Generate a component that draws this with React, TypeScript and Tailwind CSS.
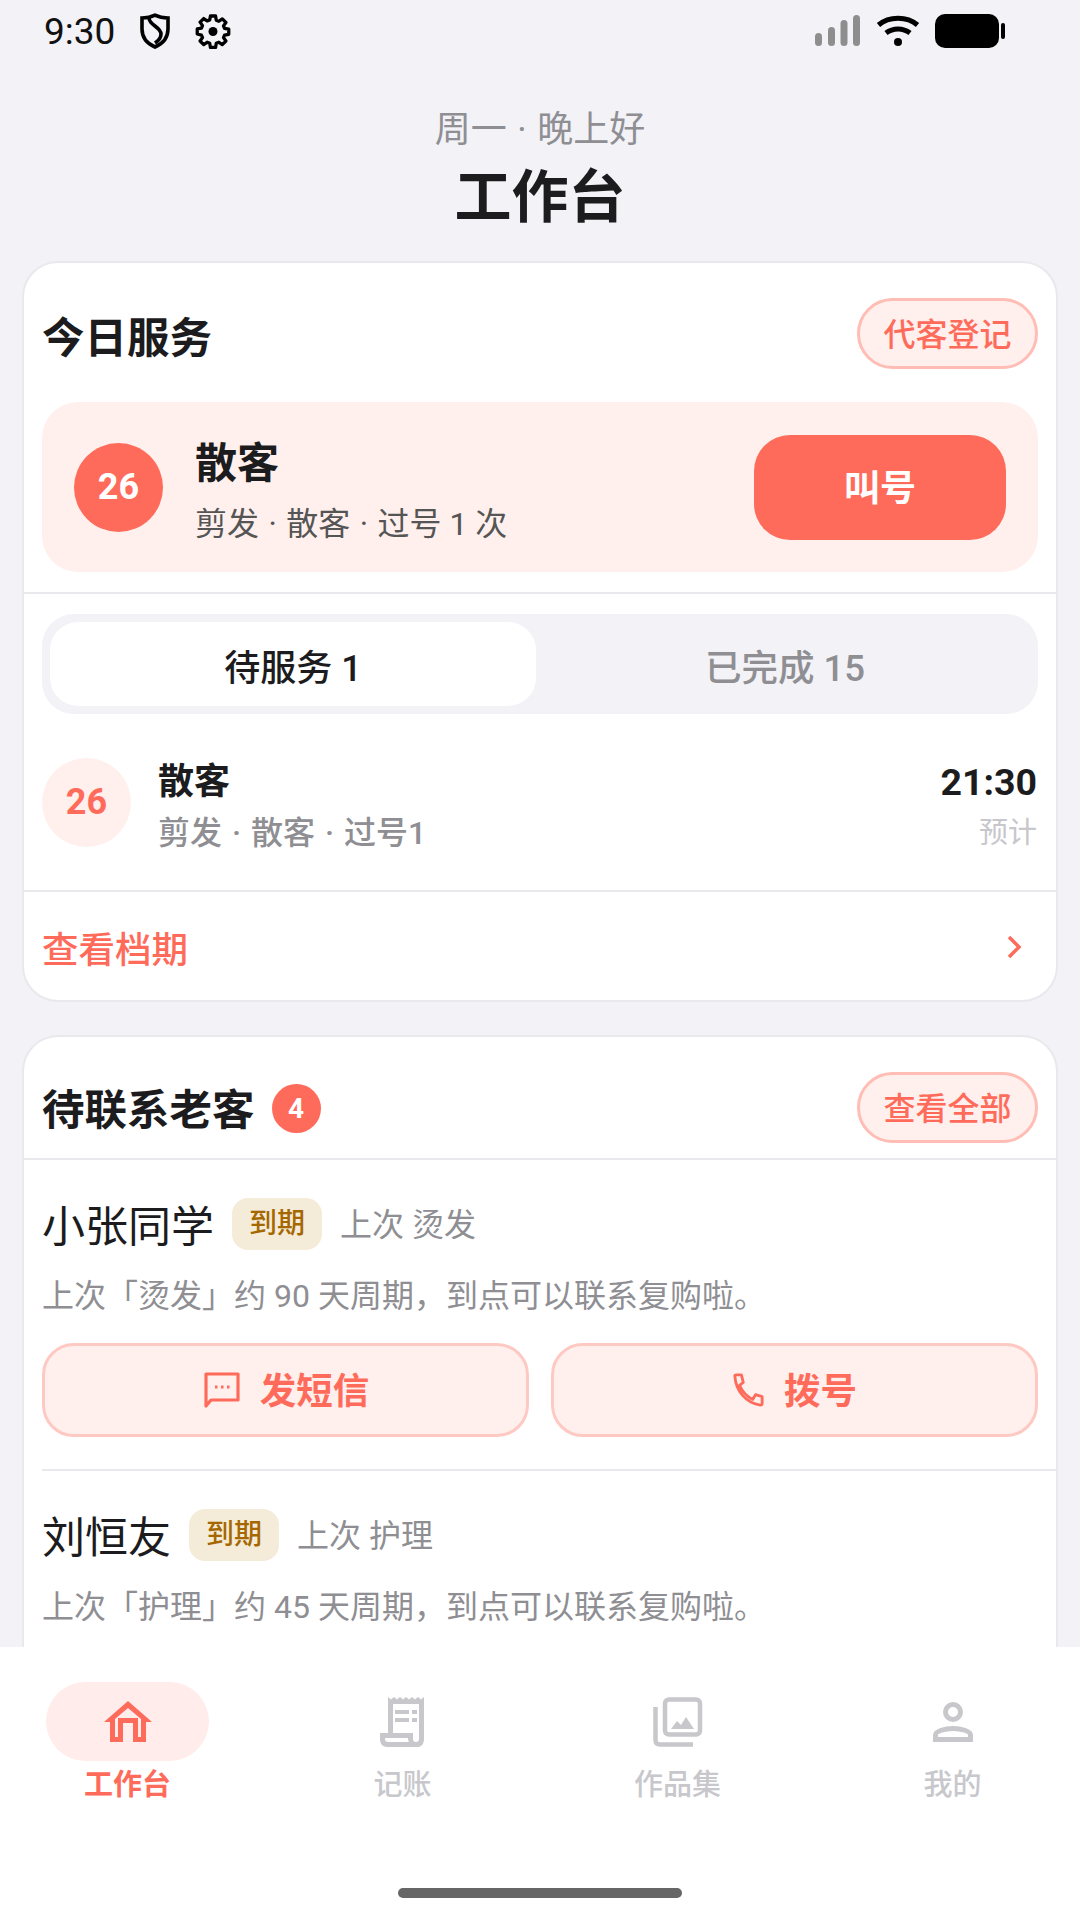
import React from "react";

const font = { fontFamily: 'Roboto, "Noto Sans CJK SC", sans-serif' };

function Dot({ m }: { m: string }) {
  return <span className={m}>·</span>;
}

function Pill({ children }: { children: React.ReactNode }) {
  return (
    <div className="flex h-[71px] w-[181px] items-center justify-center rounded-full border-[3px] border-[#ffbdb5] bg-[#fff0ed] pt-[2px] text-[32px] font-medium leading-none text-[#ff6b5b]">
      {children}
    </div>
  );
}

function Customer({ name, svc, days }: { name: string; svc: string; days: number }) {
  return (
    <div className="mx-[18px]">
      <div className="flex h-[52px] items-center">
        <span className="pt-[6px] text-[43px] leading-none text-[#1c1c1e]">{name}</span>
        <span className="ml-[18px] flex h-[52px] w-[90px] items-center justify-center rounded-[16px] bg-[#f5ebd9] text-[28px] font-medium leading-none text-[#a56800]">到期</span>
        <span className="ml-[18px] pt-[2px] text-[32px] leading-none text-[#8e8e93]">上次 {svc}</span>
      </div>
      <div className="mt-[26px] text-[32px] leading-[40px] text-[#8e8e93]">上次「{svc}」约 {days} 天周期，到点可以联系复购啦。</div>
    </div>
  );
}

function Action({ icon, label }: { icon: React.ReactNode; label: string }) {
  return (
    <div className="flex h-[94px] flex-1 items-center justify-center gap-[20px] rounded-[32px] border-[3px] border-[#ffc9c3] bg-[#fff0ed] text-[36.5px] font-bold leading-none text-[#ff6b5b]">
      {icon}
      <span className="pt-[5px]">{label}</span>
    </div>
  );
}

function NavItem({ label, active, icon }: { label: string; active?: boolean; icon: React.ReactNode }) {
  return (
    <div className="flex w-[163px] flex-col items-center">
      <div className={`flex h-[79px] w-[163px] items-center justify-center rounded-full ${active ? "bg-[#ffeceb]" : ""}`}>{icon}</div>
      <div className={`mt-[6px] text-[29px] leading-[36px] ${active ? "font-bold text-[#ff6b5b]" : "font-medium text-[#c7c7cc]"}`}>{label}</div>
    </div>
  );
}

export default function App() {
  return (
    <div style={font} className="flex h-[1920px] w-[1080px] flex-col overflow-hidden bg-[#f2f2f7]">
      <div className="flex-1 overflow-hidden">
        {/* status bar */}
        <div className="flex h-[62px] items-center justify-between pl-[44px] pr-[75px]">
          <div className="flex items-center">
            <span className="text-[37px] leading-none text-[#111]">9:30</span>
            <svg className="ml-[25px]" width="30" height="36" viewBox="0 0 30 36" fill="none" stroke="#000" strokeWidth="3.6">
              <path d="M15 2.2 C19 4.2 24 5 28 5 V16 C28 25 22 31 15 34 C8 31 2 25 2 16 V5 C6 5 11 4.2 15 2.2Z" />
              <path d="M9 5 C9 12 21 14 21 21 C21 25 18 28 15 30" />
            </svg>
            <svg className="ml-[25px]" width="36" height="36" viewBox="0 0 24 24" fill="none" stroke="#000" strokeWidth="2.2" strokeLinejoin="round">
              <path d="M10.3 2h3.4l.5 2.8 1.7.7 2.3-1.6 2.4 2.4-1.6 2.3.7 1.7 2.8.5v3.4l-2.8.5-.7 1.7 1.6 2.3-2.4 2.4-2.3-1.6-1.7.7-.5 2.8h-3.4l-.5-2.8-1.7-.7-2.3 1.6-2.4-2.4 1.6-2.3-.7-1.7L1.5 14v-3.4l2.8-.5.7-1.7-1.6-2.3 2.4-2.4 2.3 1.6 1.7-.7z" />
              <circle cx="12" cy="12.3" r="3" fill="#000" stroke="none" />
            </svg>
          </div>
          <div className="flex items-center">
            <svg width="45" height="32" viewBox="0 0 45 32" fill="#8e8e8e">
              <rect x="0" y="18" width="7" height="13" rx="3.5" />
              <rect x="13" y="12" width="7" height="19" rx="3.5" />
              <rect x="25.5" y="5" width="7" height="26" rx="3.5" />
              <rect x="38" y="0" width="7" height="31" rx="3.5" />
            </svg>
            <svg className="ml-[16px]" width="44" height="32" viewBox="0 0 44 32" fill="none" stroke="#000" strokeWidth="5">
              <path d="M2.5 10 C13 1 31 1 41.5 10" />
              <path d="M10 18 C17 12.5 27 12.5 34 18" />
              <circle cx="22" cy="27" r="4" fill="#000" stroke="none" />
            </svg>
            <svg className="ml-[15px]" width="70" height="34" viewBox="0 0 70 34" fill="#000">
              <rect x="0" y="0" width="64" height="34" rx="10" />
              <rect x="66" y="9" width="4" height="16" rx="2" />
            </svg>
          </div>
        </div>

        {/* header */}
        <div className="flex flex-col items-center">
          <div className="mt-[46px] text-[36px] leading-[44px] text-[#8e8e93]">周一 <Dot m="mx-[1.5px]" /> 晚上好</div>
          <div className="mt-[11px] text-[57px] font-bold leading-[70px] text-[#1c1c1e]">工作台</div>
        </div>

        {/* today card */}
        <div className="mx-[22px] mt-[28px] overflow-hidden rounded-[36px] border-2 border-[#e8e8ed] bg-white">
          <div className="flex items-center justify-between px-[18px] pt-[35px]">
            <span className="pt-[12px] text-[42.5px] font-bold leading-none text-[#1c1c1e]">今日服务</span>
            <Pill>代客登记</Pill>
          </div>
          <div className="mx-[18px] mt-[33px] flex h-[170px] items-center rounded-[36px] bg-[#fff0ed] px-[32px]">
            <div className="flex h-[89px] w-[89px] items-center justify-center rounded-full bg-[#ff6b5b] text-[36px] font-bold leading-none text-white">26</div>
            <div className="ml-[32px] flex-1 pt-[8px]">
              <div className="text-[42px] font-bold leading-[52px] text-[#1c1c1e]">散客</div>
              <div className="mt-[14px] text-[32px] leading-[40px] text-[#555]">剪发 <Dot m="mx-[1.5px]" /> 散客 <Dot m="mx-[1.5px]" /> 过号 1 次</div>
            </div>
            <div className="flex h-[105px] w-[252px] items-center justify-center rounded-[36px] bg-[#ff6b5b] pt-[3px] text-[36px] font-bold leading-none text-white">叫号</div>
          </div>
          <div className="mt-[20px] h-[2px] bg-[#e8e8ed]" />
          <div className="mx-[18px] mt-[20px] flex h-[100px] rounded-[32px] bg-[#f2f2f7] p-[8px]">
            <div className="flex w-[486px] items-center justify-center rounded-[28px] bg-white pt-[10px] text-[36px] font-medium leading-none text-[#1c1c1e]">待服务 1</div>
            <div className="flex flex-1 items-center justify-center pl-[4px] pt-[10px] text-[36.5px] font-medium leading-none text-[#8e8e93]">已完成 15</div>
          </div>
          <div className="flex h-[176px] items-center px-[18px]">
            <div className="flex h-[89px] w-[89px] items-center justify-center rounded-full bg-[#fff0ed] text-[36px] font-bold leading-none text-[#ff6b5b]">26</div>
            <div className="ml-[27px] flex-1 pt-[9px]">
              <div className="text-[36px] font-bold leading-[44px] text-[#1c1c1e]">散客</div>
              <div className="mt-[9px] text-[32px] font-medium leading-[40px] text-[#8e8e93]">剪发 <Dot m="mx-[2px]" /> 散客 <Dot m="mx-[2px]" /> 过号1</div>
            </div>
            <div className="flex flex-col items-end pr-[1px] pt-[8px]">
              <div className="text-[37.5px] font-bold leading-[44px] text-[#1c1c1e]">21:30</div>
              <div className="mt-[10px] text-[29px] leading-[38px] text-[#c7c7cc]">预计</div>
            </div>
          </div>
          <div className="h-[2px] bg-[#e8e8ed]" />
          <div className="flex h-[108px] items-center justify-between pl-[18px] pr-[34px]">
            <span className="pt-[11px] text-[36.5px] font-medium leading-none text-[#ff6b5b]">查看档期</span>
            <svg className="mt-[2px]" width="16" height="24" viewBox="0 0 16 24" fill="none" stroke="#ff6b5b" strokeWidth="3.5">
              <path d="M3 2 L13 12 L3 22" />
            </svg>
          </div>
        </div>

        {/* returning card */}
        <div className="mx-[22px] mt-[33px] rounded-t-[36px] border-x-2 border-t-2 border-[#e8e8ed] bg-white pb-[120px]">
          <div className="flex items-center justify-between px-[18px] pt-[35px]">
            <div className="flex items-center">
              <span className="pt-[8px] text-[42.5px] font-bold leading-none text-[#1c1c1e]">待联系老客</span>
              <span className="ml-[17px] mt-[2px] flex h-[49px] w-[49px] items-center justify-center rounded-full bg-[#ff6b5b] text-[28px] font-bold leading-none text-white">4</span>
            </div>
            <Pill>查看全部</Pill>
          </div>
          <div className="mt-[15px] h-[2px] bg-[#e8e8ed]" />
          <div className="pt-[38px]">
            <Customer name="小张同学" svc="烫发" days={90} />
            <div className="mx-[18px] mt-[27px] flex gap-[22px]">
              <Action
                label="发短信"
                icon={
                  <svg className="ml-[2px]" width="36" height="36" viewBox="0 0 36 36" fill="none" stroke="#ff6b5b" strokeWidth="3.2">
                    <path d="M2 2 H34 V28 H7 L2 34 Z" strokeLinejoin="round" />
                    <path d="M11 15h2.5M17 15h2.5M23 15h2.5" strokeWidth="3" />
                  </svg>
                }
              />
              <Action
                label="拨号"
                icon={
                  <svg width="32" height="36" viewBox="0 0 34 36" fill="none" stroke="#ff6b5b" strokeWidth="3" strokeLinejoin="round">
                    <path d="M3 3 C3 2 4 2 5 2 H10 L12 10 L8 13 C11 20 16 25 22 28 L25 23 L32 25 V33 C32 34 31 34 30 34 C15 32 4 19 3 3 Z" />
                  </svg>
                }
              />
            </div>
            <div className="ml-[18px] mt-[32px] h-[2px] bg-[#e8e8ed]" />
            <div className="pt-[38px]">
              <Customer name="刘恒友" svc="护理" days={45} />
            </div>
          </div>
        </div>
      </div>

      {/* tab bar */}
      <div className="h-[273px] shrink-0 bg-white">
        <div className="flex justify-between px-[46px] pt-[35px]">
          <NavItem
            active
            label="工作台"
            icon={
              <svg width="48" height="42" viewBox="0 0 48 42" fill="#ff6b5b">
                <path d="M24 0 L48 21 H42 V41 H29 V22 H19 V41 H6 V21 H0 Z M24 7 L11 18 V36 H14 V17 H34 V36 H37 V18 Z" fillRule="evenodd" />
              </svg>
            }
          />
          <NavItem
            label="记账"
            icon={
              <svg width="46" height="50" viewBox="0 0 46 50" fill="#c7c7cc">
                <path d="M8 0 L11 2.5 L14 0 L17 2.5 L20 0 L23 2.5 L26 0 L29 2.5 L32 0 L35 2.5 L38 0 L41 2.5 L44 0 V42 C44 47 41 50 38 50 H7 C3 50 0 47 0 42 V36 H8 Z M13 7 V36 H33 V42 C33 44 34 45 36 45 C38 45 39 44 39 42 V7 Z M5 41 V42 C5 44 6 45 8 45 H29 C28.5 44 28 43 28 41 Z" fillRule="evenodd" />
                <rect x="15" y="13" width="14" height="4" />
                <rect x="32" y="13" width="5" height="4" />
                <rect x="15" y="21" width="14" height="4" />
                <rect x="32" y="21" width="5" height="4" />
              </svg>
            }
          />
          <NavItem
            label="作品集"
            icon={
              <svg width="50" height="50" viewBox="0 0 50 50" fill="none" stroke="#c7c7cc" strokeWidth="4.5">
                <rect x="12" y="2.5" width="35" height="35" rx="4" />
                <path d="M2.5 10 V43 C2.5 46 4 47.5 7 47.5 H40" />
                <path d="M18 32 L24 24 L28 28 L33 20 L41 32 Z" fill="#c7c7cc" stroke="none" />
              </svg>
            }
          />
          <NavItem
            label="我的"
            icon={
              <svg width="40" height="40" viewBox="0 0 40 40" fill="none" stroke="#c7c7cc" strokeWidth="5">
                <circle cx="20" cy="10" r="7.5" />
                <path d="M2.5 37.5 V33 C2.5 29 12 26.5 20 26.5 C28 26.5 37.5 29 37.5 33 V37.5 Z" />
              </svg>
            }
          />
        </div>
        <div className="mx-auto mt-[85px] h-[10px] w-[284px] rounded-full bg-[#666]" />
      </div>
    </div>
  );
}
